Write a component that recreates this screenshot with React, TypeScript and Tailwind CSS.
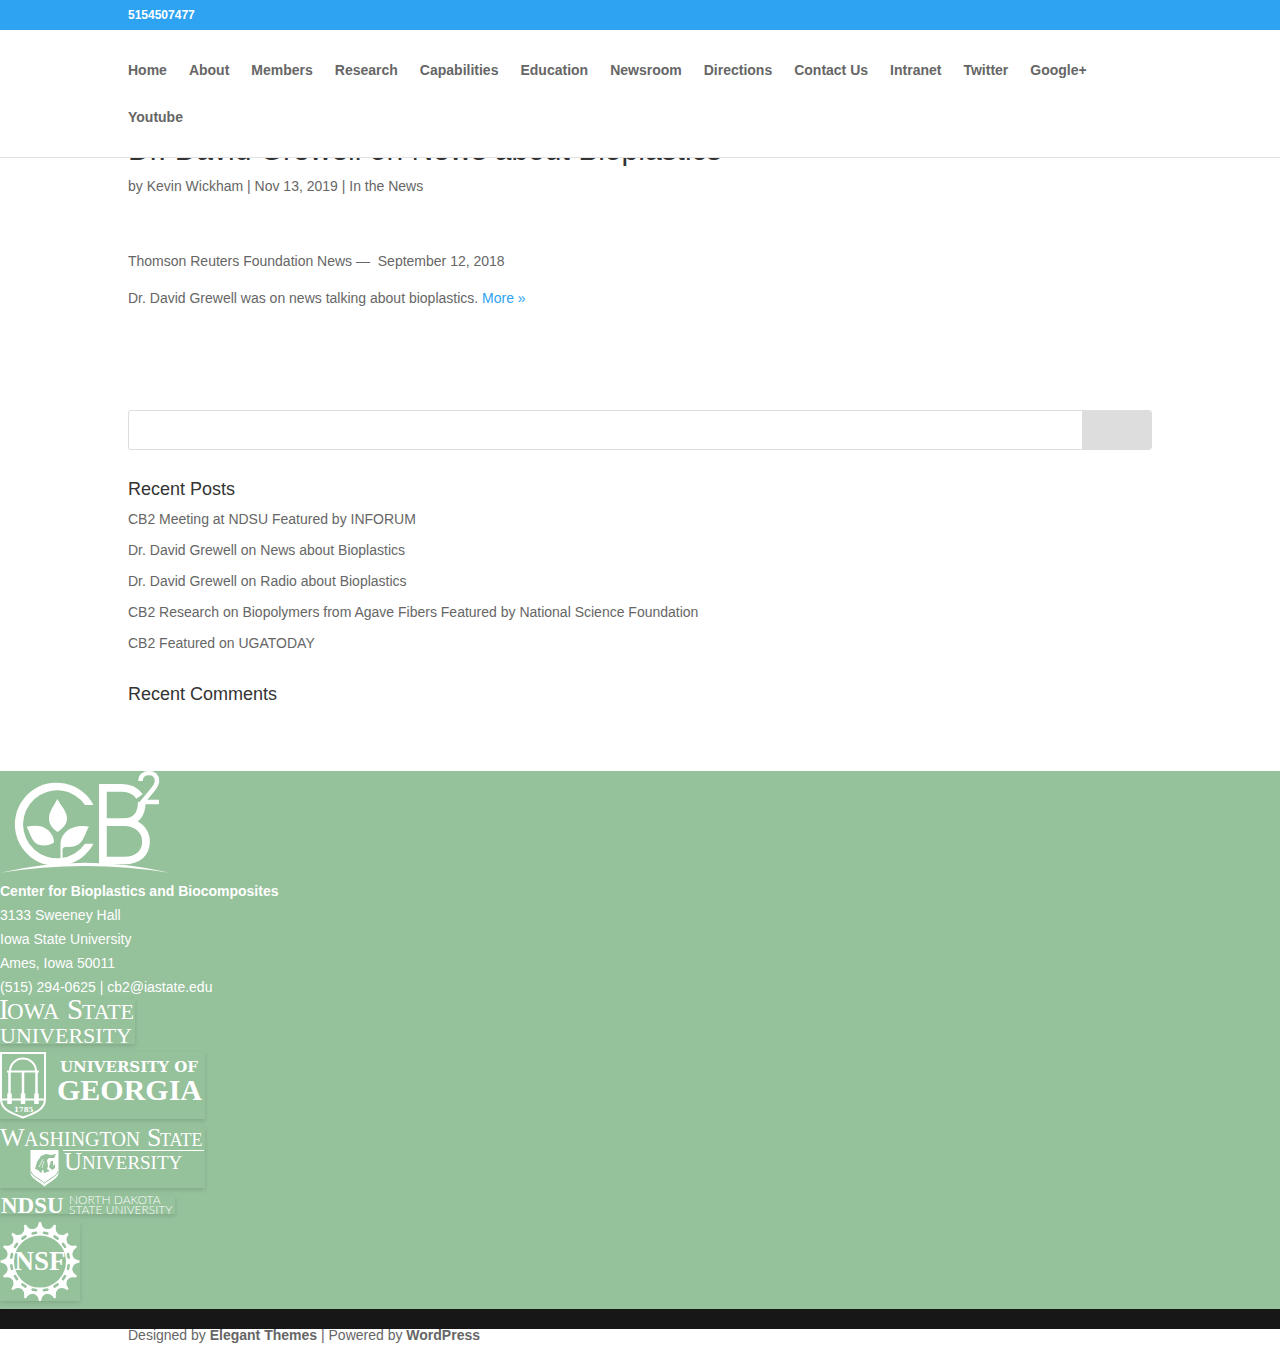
import React from "react";

const nav = ["Home", "About", "Members", "Research", "Capabilities", "Education", "Newsroom", "Directions", "Contact Us", "Intranet", "Twitter", "Google+", "Youtube"];

const posts = [
  "CB2 Meeting at NDSU Featured by INFORUM",
  "Dr. David Grewell on News about Bioplastics",
  "Dr. David Grewell on Radio about Bioplastics",
  "CB2 Research on Biopolymers from Agave Fibers Featured by National Science Foundation",
  "CB2 Featured on UGATODAY",
];

const teeth = Array.from({ length: 16 }, (_, i) => i * 22.5);

function CenterLogo() {
  return (
    <svg width="170" height="108" viewBox="0 0 170 108" role="img" aria-label="CB2" className="block overflow-visible">
      <g fill="#fff">
        <path d="M93.5 34A41.7 41.7 0 1 0 93.5 72.7H85A34 34 0 1 1 85 34Z" />
        <path d="M57.3 28C61 35 67 40 67 47.500C67 54 62 58 57.700 61C53 58 49 54 49 47.500C49 40 54 35 57.300 28Z" />
        <path d="M26.700 55.700C34 54 41 54.500 45 57C50 60 54 65 54 71.500C50 74.500 43 75.500 38 73.500C32 71 30 62 26.700 55.700Z" />
        <path d="M89 55.700C82 54 72 55.500 67 60C62 64 60.500 69 60.500 74V88H62.500V79C63 76 64 76 67 76C73 76 78 75 81 71C85 66 86 60 89 55.700Z" />
        <path d="M0 101.800Q85 81.500 170 101.800Q85 88 0 101.800Z" />
      </g>
      <g fill="none" stroke="#fff" strokeWidth="7.7">
        <path d="M102.900 93V16.800H122C130 16.800 135 19 139.500 25.500" />
        <path d="M141.800 31C141.800 43 136 51.200 124 51.200H103M124 51.200C138 51.200 146 60 146 70.500C146 82 138 89.500 124 89.500H103" />
      </g>
      <path d="M140.500 10C140.500 5 144 2 149 2C154 2 157 5 157 10C157 13 155 16 152.500 19L140 34M142 31H159" fill="none" stroke="#fff" strokeWidth="4.5" />
    </svg>
  );
}

function IowaState() {
  return (
    <svg width="135" height="45" viewBox="0 0 135 45" role="img" aria-label="Iowa State University" className="block overflow-visible shadow-[0_2px_4px_rgba(0,0,0,0.12)]" fill="#fff" fontFamily="Liberation Serif, serif">
      <text x="-1" y="20" fontSize="29">I</text>
      <text x="7" y="20" fontSize="23">OWA</text>
      <text x="67" y="20" fontSize="29">S</text>
      <text x="82" y="20" fontSize="22">TATE</text>
      <text x="0" y="44" fontSize="22">UNIVERSITY</text>
    </svg>
  );
}

function Georgia() {
  return (
    <svg width="205" height="67" viewBox="0 0 205 67" role="img" aria-label="University of Georgia" className="block overflow-visible shadow-[0_2px_4px_rgba(0,0,0,0.12)]" fill="#fff">
      <g fill="none" stroke="#fff">
        <path d="M1 1H45V47C45 57 36 61 23 65.500C10 61 1 57 1 47Z" strokeWidth="2" />
        <path d="M10 19A13 12.500 0 0 1 36 19M7 19.500H39" strokeWidth="2" />
        <path d="M9.500 20V42M23 20V42M36.500 20V42" strokeWidth="2.500" />
        <path d="M9.500 41.500V52M23 41.500V52M36.500 41.500V52" strokeWidth="4.500" />
        <path d="M1 47.500H45" strokeWidth="2" />
      </g>
      <text x="14" y="60" fontSize="7" fontWeight="700" fontFamily="DejaVu Serif, serif">1785</text>
      <text x="60" y="20" fontSize="15" fontWeight="700" fontFamily="DejaVu Serif, serif">UNIVERSITY OF</text>
      <text x="57" y="48" fontSize="30" fontWeight="700" fontFamily="Liberation Serif, serif">GEORGIA</text>
    </svg>
  );
}

function WashingtonState() {
  return (
    <svg width="205" height="61" viewBox="0 0 205 61" role="img" aria-label="Washington State University" className="block overflow-visible shadow-[0_2px_4px_rgba(0,0,0,0.12)]" fill="#fff" fontFamily="Liberation Serif, serif">
      <text x="0" y="19" fontSize="26">W</text>
      <text x="24" y="19" fontSize="20">ASHINGTON</text>
      <text x="147" y="19" fontSize="26">S</text>
      <text x="160" y="19" fontSize="18">TATE</text>
      <rect x="63" y="23" width="141" height="1" />
      <text x="64" y="43" fontSize="25">U</text>
      <text x="82" y="42" fontSize="19">NIVERSITY</text>
      <path d="M30.500 23H58.500V46C58.500 51 51 54 44.500 59.500C38 54 30.500 51 30.500 46Z" />
      <path d="M31 44.500C32 49 39 51.500 44.500 56C50 51.500 57 49 58 44.500" fill="none" stroke="#95c19b" strokeWidth="1" />
      <path d="M35 42L37 35L41 29L46 27L51 28L56 27L54 31L49 31L47 33L48 39L47 42L50 44L44 46L43 42L41 46L38 43ZM51 34H53V39L55 37V41L52 43L49 40Z" fill="#95c19b" />
      <path d="M39 40L43 32M42 41L44 34" stroke="#fff" strokeWidth="0.700" />
    </svg>
  );
}

function NorthDakota() {
  return (
    <svg width="175" height="18" viewBox="0 0 175 18" role="img" aria-label="NDSU North Dakota State University" className="block overflow-visible shadow-[0_2px_4px_rgba(0,0,0,0.12)]" fill="#fff">
      <text x="1" y="17" fontSize="23" fontWeight="700" fontFamily="Liberation Serif, serif">NDSU</text>
      <g fontSize="12" fontWeight="300" fontFamily="Lato, sans-serif">
        <text x="69" y="8">NORTH DAKOTA</text>
        <text x="69" y="18">STATE UNIVERSITY</text>
      </g>
    </svg>
  );
}

function Nsf() {
  return (
    <svg width="80" height="79" viewBox="0 0 80 79" role="img" aria-label="NSF" className="block overflow-visible shadow-[0_2px_4px_rgba(0,0,0,0.12)]">
      <circle cx="40" cy="39.500" r="29.500" fill="none" stroke="#fff" strokeWidth="7" />
      {teeth.map((a) => (
        <path key={a} transform={`rotate(${a} 40 39.5)`} d="M39 0H41L41.700 2.500Q42.300 5.500 46 7V9H34V7Q37.700 5.500 38.300 2.500Z" fill="#fff" />
      ))}
      {teeth.map((a) => (
        <rect key={a} transform={`rotate(${a + 11.25} 40 39.5)`} x="37" y="9.300" width="6" height="2.600" rx="1" fill="#95c19b" />
      ))}
      <text x="40" y="48" textAnchor="middle" fontSize="27" fontWeight="700" fill="#fff" fontFamily="Liberation Serif, serif">NSF</text>
    </svg>
  );
}

export default function App() {
  return (
    <div className="bg-white font-['Liberation_Sans',Arial,sans-serif] text-sm leading-6 text-[#666]">
      <div className="fixed inset-x-0 top-0 z-10">
        <div className="bg-[#2ea3f2] text-xs font-bold text-white">
          <div className="mx-auto flex h-[30px] w-4/5 items-center">
            <a href="#phone">5154507477</a>
          </div>
        </div>
        <header className="border-b border-[#e2e2e2] bg-white pt-[17px] pb-4">
          <nav className="mx-auto flex w-4/5 flex-wrap gap-x-[22px] font-bold leading-[47px]">
            {nav.map((n) => (
              <a key={n} href="#nav">{n}</a>
            ))}
          </nav>
        </header>
      </div>

      <main className="mx-auto w-4/5 pt-[135px]">
        <h1 className="text-[30px] leading-[30px] text-[#333]">Dr. David Grewell on News about Bioplastics</h1>
        <p className="mt-[9px]">
          by <a href="#author">Kevin Wickham</a> | Nov 13, 2019 | <a href="#news">In the News</a>
        </p>
        <p className="mt-[51px]">Thomson Reuters Foundation News —&nbsp; September 12, 2018</p>
        <p className="mt-[13px]">
          Dr. David Grewell was on news talking about bioplastics. <a href="#more" className="text-[#2ea3f2]">More »</a>
        </p>

        <form className="mt-[100px] flex h-10 overflow-hidden rounded-[3px] border border-[#ddd]" onSubmit={(e) => e.preventDefault()}>
          <input type="text" aria-label="Search for" className="min-w-0 flex-1 px-2 outline-none" />
          <button type="submit" aria-label="Search" className="w-[69px] bg-[#ddd]" />
        </form>

        <h4 className="mt-[30px] text-lg leading-[18px] text-[#333]">Recent Posts</h4>
        <ul className="mt-[9px] flex flex-col gap-[7px]">
          {posts.map((p) => (
            <li key={p}><a href="#post">{p}</a></li>
          ))}
        </ul>
        <h4 className="mt-[30px] text-lg leading-[18px] text-[#333]">Recent Comments</h4>
      </main>

      <footer className="mt-[68px] pb-4">
        <div className="bg-[#95c19b] pb-2 text-white">
          <CenterLogo />
          <address className="not-italic">
            <strong>Center for Bioplastics and Biocomposites</strong><br />
            3133 Sweeney Hall<br />
            Iowa State University<br />
            Ames, Iowa 50011<br />
            (515) 294-0625 | <a href="#email">cb2@iastate.edu</a>
          </address>
          <div className="flex flex-col items-start gap-2">
            <a href="#iastate"><IowaState /></a>
            <a href="#uga"><Georgia /></a>
            <a href="#wsu"><WashingtonState /></a>
            <a href="#ndsu"><NorthDakota /></a>
            <a href="#nsf"><Nsf /></a>
          </div>
        </div>
        <div className="h-5 bg-[#171717]" />
        <p className="mx-auto w-4/5 leading-3">
          Designed by <a href="#elegant" className="font-bold">Elegant Themes</a> | Powered by <a href="#wordpress" className="font-bold">WordPress</a>
        </p>
      </footer>
    </div>
  );
}
